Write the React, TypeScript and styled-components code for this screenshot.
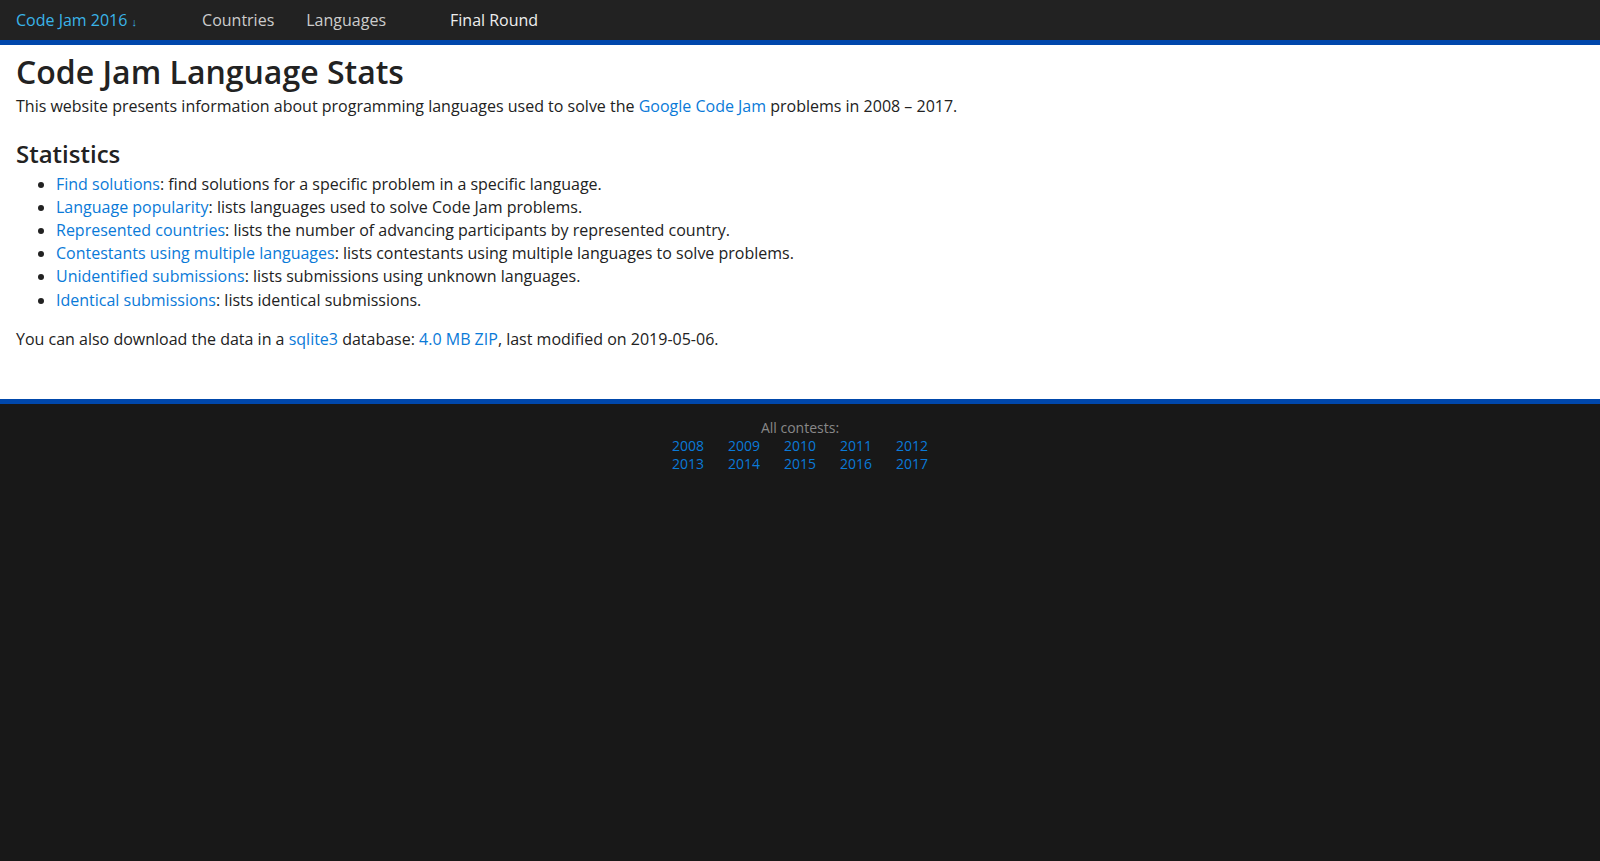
import React from 'react'
import styled, { createGlobalStyle } from 'styled-components'

const GlobalStyle = createGlobalStyle`
    html, body {
        margin: 0;
        padding: 0;
        background: #181818;
        font-family: "Open Sans", "Liberation Sans", sans-serif;
        color: #222;
    }
`

const statLinks = [
    { label: 'Find solutions', text: ': find solutions for a specific problem in a specific language.' },
    { label: 'Language popularity', text: ': lists languages used to solve Code Jam problems.' },
    { label: 'Represented countries', text: ': lists the number of advancing participants by represented country.' },
    { label: 'Contestants using multiple languages', text: ': lists contestants using multiple languages to solve problems.' },
    { label: 'Unidentified submissions', text: ': lists submissions using unknown languages.' },
    { label: 'Identical submissions', text: ': lists identical submissions.' },
]

const years = [2008, 2009, 2010, 2011, 2012, 2013, 2014, 2015, 2016, 2017]

export default function App() {
    return (
        <>
            <GlobalStyle />
            <NavBar>
                <Brand href="#">Code Jam 2016 <Arrow>↓</Arrow></Brand>
                <NavLink href="#" $offset={33}>Countries</NavLink>
                <NavLink href="#">Languages</NavLink>
                <NavLink href="#" $offset={32} $active>Final Round</NavLink>
            </NavBar>
            <Main>
                <Title>Code Jam Language Stats</Title>
                <Paragraph>
                    This website presents information about programming languages used to solve the{' '}
                    <Link href="#">Google Code Jam</Link> problems in 2008 – 2017.
                </Paragraph>
                <Heading>Statistics</Heading>
                <List>
                    {statLinks.map((s, i) => (
                        <Item key={s.label} $last={i === statLinks.length - 1}>
                            <Link href="#">{s.label}</Link>{s.text}
                        </Item>
                    ))}
                </List>
                <Paragraph $spaced>
                    You can also download the data in a <Link href="#">sqlite3</Link> database:{' '}
                    <Link href="#">4.0 MB ZIP</Link>, last modified on 2019-05-06.
                </Paragraph>
            </Main>
            <Footer>
                <FooterLabel>All contests:</FooterLabel>
                <YearGrid>
                    {years.map(y => (
                        <YearLink key={y} href="#">{y}</YearLink>
                    ))}
                </YearGrid>
            </Footer>
        </>
    )
}

const NavBar = styled.nav`
    display: flex;
    align-items: center;
    height: 40px;
    background: #222;
    border-bottom: 5px solid #0047ab;
    font-size: 16px;
`

const Brand = styled.a`
    padding: 1px 16px 0;
    color: #3ab4e8;
    text-decoration: none;
    line-height: 39px;
`

const Arrow = styled.span`
    font-size: 11px;
`

const NavLink = styled.a<{ $offset?: number, $active?: boolean }>`
    padding: 0 16px;
    margin-left: ${p => p.$offset || 0}px;
    color: ${p => p.$active ? '#eee' : '#ccc'};
    text-decoration: none;
    line-height: 40px;
`

const Main = styled.main`
    background: #fff;
    padding: 7px 16px 48px;
    font-size: 16px;
`

const Title = styled.h1`
    margin: 0;
    font-size: 32px;
    font-weight: 600;
    line-height: 40px;
    color: #222;
`

const Paragraph = styled.p<{ $spaced?: boolean }>`
    margin: ${p => p.$spaced ? '15px' : '2px'} 0 0;
    line-height: 24px;
`

const Heading = styled.h2`
    margin: 21px 0 4px;
    font-size: 24px;
    font-weight: 600;
    line-height: 30px;
`

const List = styled.ul`
    margin: 0;
    padding-left: 40px;
`

const Item = styled.li<{ $last?: boolean }>`
    line-height: 23px;
    margin-top: ${p => p.$last ? '1px' : '0'};
`

const Link = styled.a`
    color: #0a7ad8;
    text-decoration: none;
`

const Footer = styled.footer`
    border-top: 5px solid #0047ab;
    background: #181818;
    padding-top: 15px;
    text-align: center;
    font-size: 14px;
    line-height: 18px;
`

const FooterLabel = styled.div`
    color: #888;
`

const YearGrid = styled.div`
    display: inline-grid;
    grid-template-columns: repeat(5, auto);
    column-gap: 24px;
`

const YearLink = styled.a`
    color: #0a7ad8;
    text-decoration: none;
`
